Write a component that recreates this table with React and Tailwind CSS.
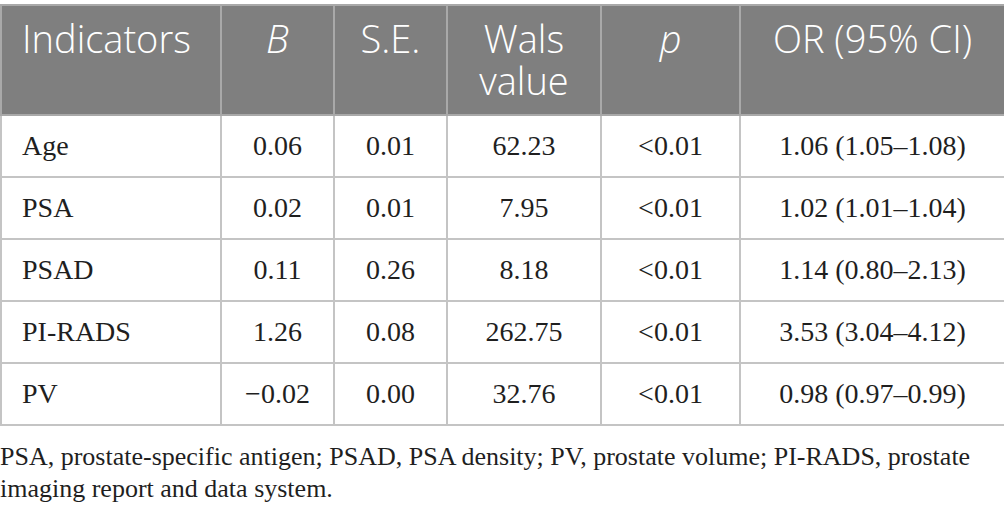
import React from "react";

const rows = [
  ["Age", "0.06", "0.01", "62.23", "<0.01", "1.06 (1.05–1.08)"],
  ["PSA", "0.02", "0.01", "7.95", "<0.01", "1.02 (1.01–1.04)"],
  ["PSAD", "0.11", "0.26", "8.18", "<0.01", "1.14 (0.80–2.13)"],
  ["PI-RADS", "1.26", "0.08", "262.75", "<0.01", "3.53 (3.04–4.12)"],
  ["PV", "−0.02", "0.00", "32.76", "<0.01", "0.98 (0.97–0.99)"],
];

const serif = { fontFamily: '"Liberation Serif", "Times New Roman", serif' };

export default function App() {
  return (
    <div className="w-[1004px] h-[512px] bg-white pt-[4px] overflow-hidden">
      <table className="table-fixed border-collapse w-[1004px]">
        <colgroup>
          <col className="w-[220px]" />
          <col className="w-[113px]" />
          <col className="w-[113px]" />
          <col className="w-[154px]" />
          <col className="w-[139px]" />
          <col className="w-[265px]" />
        </colgroup>
        <thead>
          <tr className="bg-[#7f7f7f] text-white font-['Open_Sans',sans-serif] font-light text-[38px] leading-[42px] h-[110px] align-top">
            <th className="border-2 border-[#a9a9a9] text-left font-light pl-[20px] pt-[11px]">Indicators</th>
            <th className="border-2 border-[#a9a9a9] text-center font-light italic pt-[11px]">B</th>
            <th className="border-2 border-[#a9a9a9] text-center font-light pt-[11px]">S.E.</th>
            <th className="border-2 border-[#a9a9a9] text-center font-light pt-[11px]">
              <div>Wals</div>
              <div>value</div>
            </th>
            <th className="border-2 border-[#a9a9a9] text-center font-light italic pt-[11px]">p</th>
            <th className="border-2 border-[#a9a9a9] text-center font-light pt-[11px]">OR (95% CI)</th>
          </tr>
        </thead>
        <tbody style={serif} className="text-[28px] text-[#1f1f1f]">
          {rows.map((r) => (
            <tr key={r[0]} className="h-[62px]">
              <td className="border-2 border-[#c4c4c4] pl-[20px] align-middle">{r[0]}</td>
              {r.slice(1).map((c, i) => (
                <td key={i} className="border-2 border-[#c4c4c4] text-center align-middle">
                  {c}
                </td>
              ))}
            </tr>
          ))}
        </tbody>
      </table>
      <p style={serif} className="mt-[15px] text-[26px] leading-[32px] text-[#1f1f1f]">
        PSA, prostate-specific antigen; PSAD, PSA density; PV, prostate volume; PI-RADS, prostate
        <br />
        imaging report and data system.
      </p>
    </div>
  );
}
